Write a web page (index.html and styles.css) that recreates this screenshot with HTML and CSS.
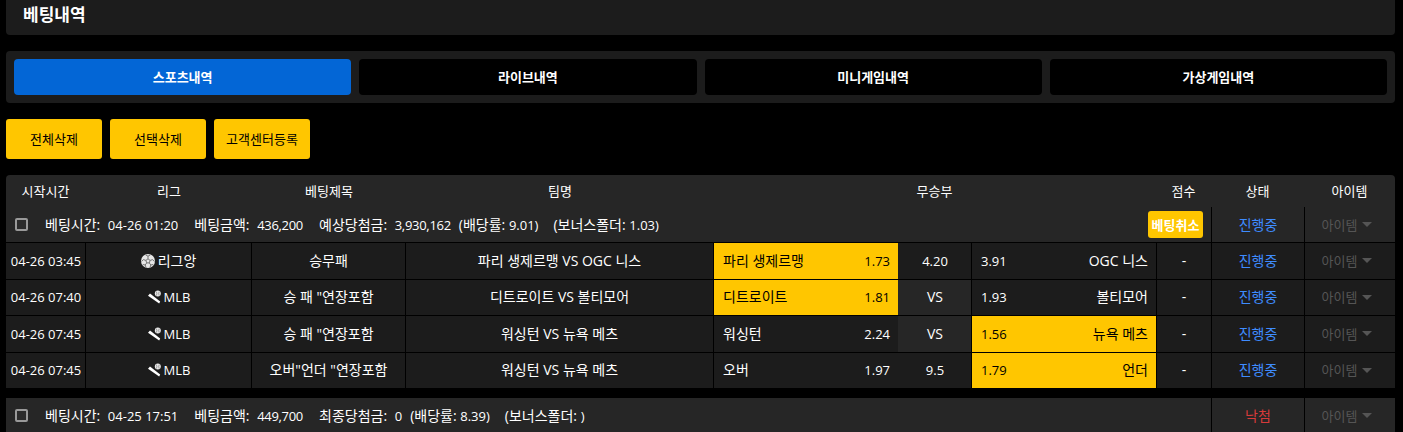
FILE: index.html
```html
<!DOCTYPE html>
<html lang="ko">
<head>
  <meta charset="UTF-8">
  <title>베팅내역</title>
  <link rel="stylesheet" href="styles.css">
</head>
<body>
  <div class="page-title">베팅내역</div>

  <div class="tabs">
    <a class="tab active">스포츠내역</a>
    <a class="tab">라이브내역</a>
    <a class="tab">미니게임내역</a>
    <a class="tab">가상게임내역</a>
  </div>

  <div class="actions">
    <button class="action">전체삭제</button>
    <button class="action">선택삭제</button>
    <button class="action">고객센터등록</button>
  </div>

  <div class="table">
    <div class="row head">
      <div>시작시간</div>
      <div class="nudge">리그</div>
      <div class="nudge">베팅제목</div>
      <div class="nudge">팀명</div>
      <div>무승부</div>
      <div>점수</div>
      <div>상태</div>
      <div>아이템</div>
    </div>

    <div class="summary">
      <div class="summary-info">
        <span class="check"></span>
        <span class="pair">베팅시간: <span class="num">04-26 01:20</span></span>
        <span class="pair">베팅금액: <span class="num amount">436,200</span></span>
        <span class="pair">예상당첨금: <span class="num amount">3,930,162</span></span>
        <span class="near">(배당률: <span class="num">9.01)</span></span>
        <span class="bonus">(보너스폴더: <span class="num">1.03)</span></span>
        <button class="cancel">베팅취소</button>
      </div>
      <div class="status blue">진행중</div>
      <div class="item">아이템<i class="caret"></i></div>
    </div>

    <div class="row bet">
      <div class="num time">04-26 03:45</div>
      <div class="league">
        <svg class="icon" viewBox="0 0 14 14"><circle cx="7" cy="7" r="7" fill="#e6e6e6"/><path d="M7 4.800 9.100 6.400 8.300 8.900H5.700L4.900 6.400ZM7 4.800V2.200M9.100 6.400 11.600 5.600M8.300 8.900 9.800 11M5.700 8.900 4.200 11M4.900 6.400 2.400 5.600M4.600 .9 7 2.200 9.400 .9M11.600 5.600 13.400 7.500M2.400 5.600 .6 7.500M4.200 11 5 13.500M9.800 11 9 13.500M4.200 11 1.800 10.500M9.800 11 12.200 10.500" fill="none" stroke="#666" stroke-width=".9"/></svg>
        리그앙
      </div>
      <div>승무패</div>
      <div>파리 생제르맹 VS OGC 니스</div>
      <div class="odds on"><span>파리 생제르맹</span><span class="num">1.73</span></div>
      <div class="mid num">4.20</div>
      <div class="odds"><span class="num">3.91</span><span>OGC 니스</span></div>
      <div>-</div>
      <div class="status blue">진행중</div>
      <div class="item">아이템<i class="caret"></i></div>
    </div>

    <div class="row bet">
      <div class="num time">04-26 07:40</div>
      <div class="league num">
        <svg class="icon" viewBox="0 0 14 14"><path d="M1 5.800 3 3.400 13.200 11.600 12.200 13.600Z" fill="#fff"/><circle cx="10.800" cy="3.600" r="3" fill="#e8e8e8"/><path d="M9.400 1.600Q10.400 3.600 9.400 5.600M12.200 1.600Q11.200 3.600 12.200 5.600" fill="none" stroke="#777" stroke-width=".7"/></svg>
        MLB
      </div>
      <div>승 패 "연장포함</div>
      <div>디트로이트 VS 볼티모어</div>
      <div class="odds on"><span>디트로이트</span><span class="num">1.81</span></div>
      <div class="mid vs">VS</div>
      <div class="odds"><span class="num">1.93</span><span>볼티모어</span></div>
      <div>-</div>
      <div class="status blue">진행중</div>
      <div class="item">아이템<i class="caret"></i></div>
    </div>

    <div class="row bet">
      <div class="num time">04-26 07:45</div>
      <div class="league num">
        <svg class="icon" viewBox="0 0 14 14"><path d="M1 5.800 3 3.400 13.200 11.600 12.200 13.600Z" fill="#fff"/><circle cx="10.800" cy="3.600" r="3" fill="#e8e8e8"/><path d="M9.400 1.600Q10.400 3.600 9.400 5.600M12.200 1.600Q11.200 3.600 12.200 5.600" fill="none" stroke="#777" stroke-width=".7"/></svg>
        MLB
      </div>
      <div>승 패 "연장포함</div>
      <div>워싱턴 VS 뉴욕 메츠</div>
      <div class="odds"><span>워싱턴</span><span class="num">2.24</span></div>
      <div class="mid vs">VS</div>
      <div class="odds on"><span class="num">1.56</span><span>뉴욕 메츠</span></div>
      <div>-</div>
      <div class="status blue">진행중</div>
      <div class="item">아이템<i class="caret"></i></div>
    </div>

    <div class="row bet">
      <div class="num time">04-26 07:45</div>
      <div class="league num">
        <svg class="icon" viewBox="0 0 14 14"><path d="M1 5.800 3 3.400 13.200 11.600 12.200 13.600Z" fill="#fff"/><circle cx="10.800" cy="3.600" r="3" fill="#e8e8e8"/><path d="M9.400 1.600Q10.400 3.600 9.400 5.600M12.200 1.600Q11.200 3.600 12.200 5.600" fill="none" stroke="#777" stroke-width=".7"/></svg>
        MLB
      </div>
      <div>오버"언더 "연장포함</div>
      <div>워싱턴 VS 뉴욕 메츠</div>
      <div class="odds"><span>오버</span><span class="num">1.97</span></div>
      <div class="mid num">9.5</div>
      <div class="odds on"><span class="num">1.79</span><span>언더</span></div>
      <div>-</div>
      <div class="status blue">진행중</div>
      <div class="item">아이템<i class="caret"></i></div>
    </div>

    <div class="gap"></div>

    <div class="summary">
      <div class="summary-info">
        <span class="check"></span>
        <span class="pair">베팅시간: <span class="num">04-25 17:51</span></span>
        <span class="pair">베팅금액: <span class="num amount">449,700</span></span>
        <span class="pair">최종당첨금: <span class="num">0</span></span>
        <span class="near">(배당률: <span class="num">8.39)</span></span>
        <span class="bonus">(보너스폴더: <span class="num">)</span></span>
      </div>
      <div class="status red">낙첨</div>
      <div class="item">아이템<i class="caret"></i></div>
    </div>
  </div>
</body>
</html>
```
FILE: styles.css
```css
* {
  box-sizing: border-box;
}
html {
  overflow: hidden;
}
body {
  margin: 0;
  height: 432px;
  overflow: hidden;
  background: #000;
  color: #fff;
  font-family: "Open Sans", "Noto Sans CJK KR", sans-serif;
  font-size: 13px;
  line-height: 18px;
  padding: 0 8px 0 6px;
}
.page-title {
  height: 35px;
  background: #1c1c1c;
  border-radius: 0 0 4px 4px;
  padding: 3px 17px 0;
  font-size: 17px;
  font-weight: 700;
  line-height: 24px;
}
.tabs {
  display: grid;
  grid-template-columns: repeat(4, 1fr);
  gap: 8px;
  margin-top: 16px;
  padding: 8px;
  height: 52px;
  background: #1c1c1c;
  border-radius: 4px;
}
.tab {
  display: flex;
  align-items: center;
  justify-content: center;
  background: #000;
  border-radius: 4px;
  font-weight: 700;
}
.tab.active {
  background: #0366d6;
}
.actions {
  display: flex;
  gap: 8px;
  margin-top: 16px;
}
.action {
  width: 96px;
  height: 40px;
  border: 0;
  border-radius: 3px;
  background: #ffc600;
  color: #000;
  font: inherit;
  padding: 0;
}
.table {
  margin-top: 16px;
  background: #262626;
  border-radius: 4px 4px 0 0;
}
.row {
  display: grid;
  text-align: center;
}
.row.head {
  grid-template-columns: 79px 166px 154px 308px 443px 55px 93px 91px;
  height: 32px;
  align-items: center;
}
.row.head .nudge {
  padding-left: 2px;
}
.row.bet {
  grid-template-columns: 79px 166px 154px 308px 185px 73px 185px 55px 93px 91px;
  height: 36.5px;
  font-size: 14px;
}
.row.bet > div {
  display: flex;
  align-items: center;
  justify-content: center;
  background: #1c1c1c;
  border-top: 1px solid #000;
  border-left: 1px solid #000;
}
.row.bet > div:first-child {
  border-left: 0;
}
.row.bet > .mid {
  border-left: 0;
  padding-left: 1px;
}
.row.bet > .mid.vs {
  background: #262626;
}
.row.bet > .time {
  padding-left: 1px;
}
.row.bet > .odds {
  justify-content: space-between;
  padding: 0 8px 0 9px;
}
.row.bet > .odds.on {
  background: #ffc600;
  color: #000;
}
.num {
  font-size: 13px;
}
.amount {
  letter-spacing: -0.3px;
}
.league {
  gap: 3px;
}
.icon {
  width: 14px;
  height: 14px;
  flex: none;
}
.summary {
  display: grid;
  grid-template-columns: 1205px 93px 91px;
  height: 35px;
}
.gap {
  height: 10px;
  background: #000;
}
.summary > div {
  display: flex;
  align-items: center;
  justify-content: center;
}
.summary > .summary-info {
  justify-content: flex-start;
  font-size: 14px;
  gap: 16px;
  padding-left: 9px;
}
.pair .num {
  margin-left: 4px;
}
.summary-info .near {
  margin-left: -8px;
}
.summary-info .bonus {
  margin-left: -1px;
}
.check {
  width: 13px;
  height: 13px;
  margin-right: 1px;
  border: 2px solid #999;
  border-radius: 2px;
  background: #2b2b2b;
}
.cancel {
  margin-left: auto;
  margin-right: 8px;
  width: 55px;
  height: 27px;
  border: 0;
  border-radius: 3px;
  background: #ffc600;
  color: #fff;
  font-family: inherit;
  font-size: 13px;
  font-weight: 700;
  padding: 0;
}
.status, .item {
  border-left: 1px solid #000;
}
.row.bet > .status, .summary > .status {
  font-size: 14px;
}
.blue {
  color: #3f8cff;
}
.red {
  color: #d63a3a;
}
.row.bet > .item, .summary > .item {
  color: #555;
  font-size: 13px;
  padding-right: 6px;
}
.caret {
  display: inline-block;
  width: 0;
  height: 0;
  margin-left: 5px;
  border-left: 5px solid transparent;
  border-right: 5px solid transparent;
  border-top: 5px solid #555;
}
```
